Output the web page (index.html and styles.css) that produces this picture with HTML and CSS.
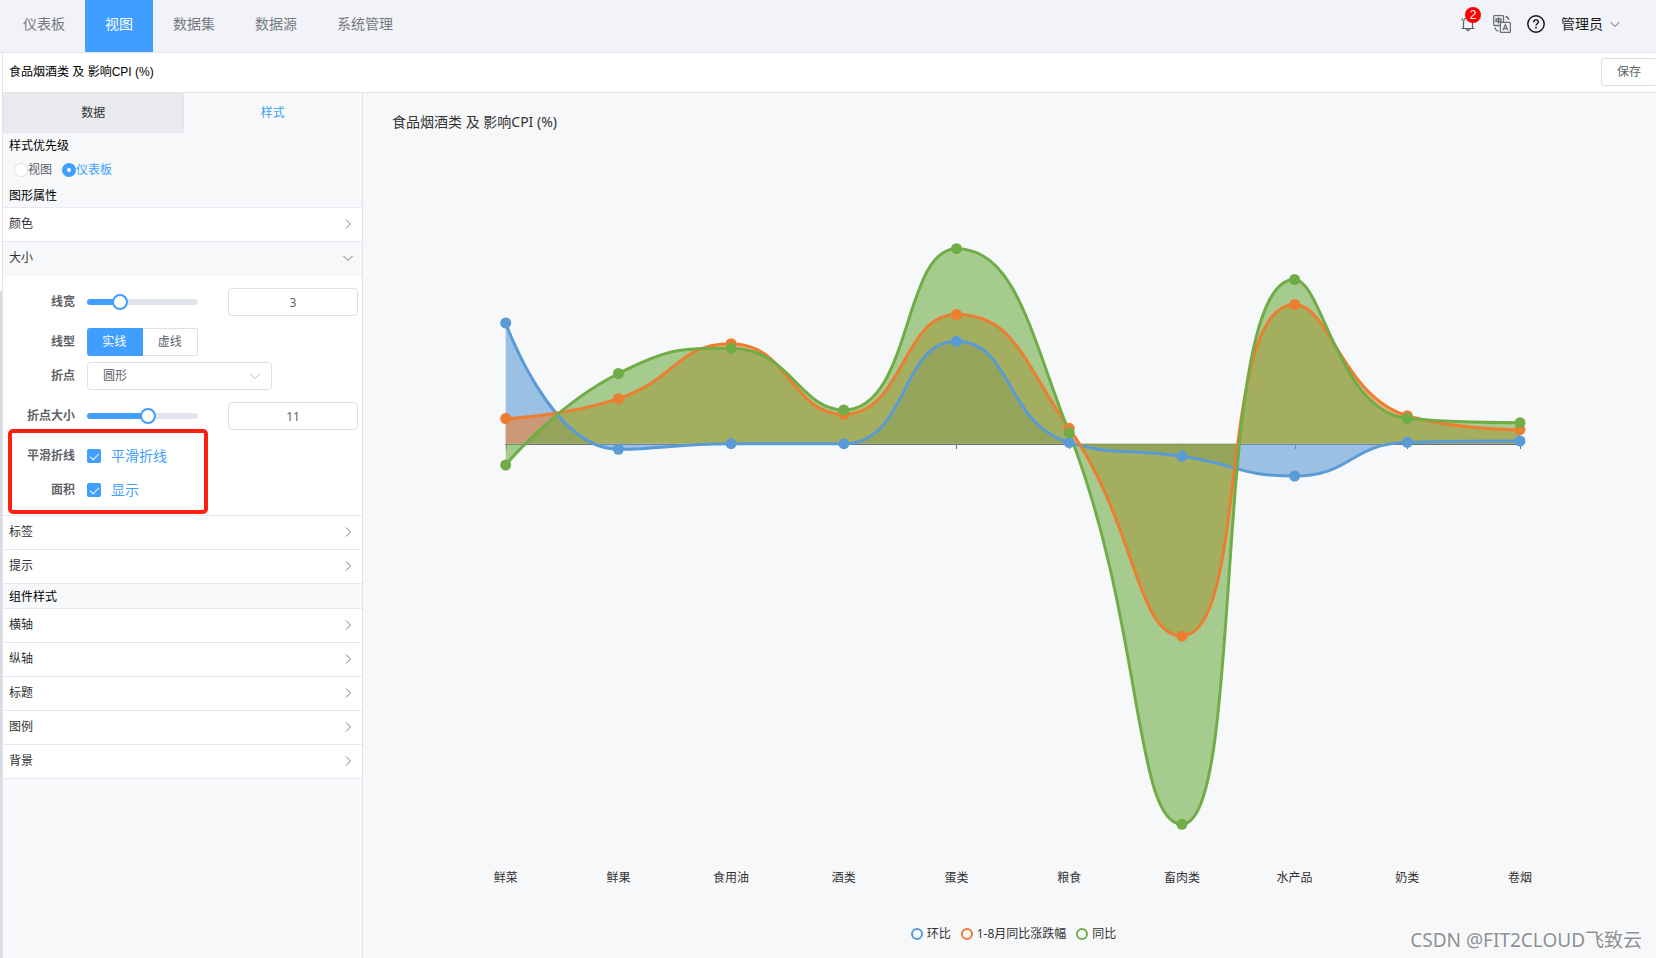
FILE: index.html
```html
<!DOCTYPE html>
<html lang="zh-CN">
<head>
<meta charset="utf-8">
<title>食品烟酒类 及 影响CPI (%)</title>
<link rel="stylesheet" href="styles.css">
</head>
<body>
<svg class="defs" aria-hidden="true">
  <symbol id="right" viewBox="0 0 12 12"><path d="M4 1.5 8.5 6 4 10.5" fill="none" stroke="currentColor"/></symbol>
  <symbol id="down" viewBox="0 0 12 12"><path d="M1.5 4 6 8.5 10.5 4" fill="none" stroke="currentColor"/></symbol>
</svg>
<header class="header">
  <nav class="menu">
    <a href="#">仪表板</a>
    <a href="#" class="active">视图</a>
    <a href="#">数据集</a>
    <a href="#">数据源</a>
    <a href="#">系统管理</a>
  </nav>
  <div class="tools">
    <button class="tool bell" type="button" aria-label="消息">
      <svg width="16" height="18" viewBox="0 0 16 18" fill="none" stroke="#5a5e66" stroke-width="1.2"><path d="M3.500 13.500V7.500C3.500 4.500 5.500 2.600 8 2.600s4.500 1.900 4.500 4.900v6M1.500 13.500h13M6 14l2 1.800 2-1.800M1.500 5.500l1.500-2"/></svg>
      <span class="badge">2</span>
    </button>
    <button class="tool lang" type="button" aria-label="语言">
      <svg width="18" height="18" viewBox="0 0 18 18" fill="none" stroke="#6b6e75" stroke-width="1.300"><path d="M7 10.500H1.600a1 1 0 0 1-1-1V1.600a1 1 0 0 1 1-1h7.900a1 1 0 0 1 1 1V7"/><path d="M3 4h5v2.500H3zM5.500 2.200v6.400"/><rect x="7.400" y="7.400" width="10" height="10" rx="1"/><path d="M10 15.200l2.400-5.600 2.400 5.600M10.800 13.600h3.200M12.500 1.500q3 .5 3.300 3.500M2 12.500q.4 3 3.500 3.700"/></svg>
    </button>
    <button class="tool help" type="button" aria-label="帮助">
      <svg width="18" height="18" viewBox="0 0 18 18" fill="none" stroke="#111" stroke-width="1.400"><circle cx="9" cy="9" r="8.200"/><path d="M6.700 7.200C6.700 5.700 7.700 4.900 9 4.900s2.300.8 2.300 2.100c0 1.700-2.300 1.800-2.300 3.500M9 11.800v1.600"/></svg>
    </button>
    <button class="user" type="button">管理员 <svg width="12" height="12"><use href="#down"/></svg></button>
  </div>
</header>
<div class="page">
  <div class="rail"></div>
  <div class="editor">
    <div class="titlebar">
      <h1>食品烟酒类 及 影响CPI (%)</h1>
      <button class="save" type="button">保存</button>
    </div>
    <div class="body">
      <aside class="side">
        <div class="tabs" role="tablist">
          <button type="button" role="tab" class="tab">数据</button>
          <button type="button" role="tab" class="tab current" aria-selected="true">样式</button>
        </div>
        <h2 class="caption">样式优先级</h2>
        <div class="radios">
          <label><input type="radio" name="priority">视图</label>
          <label><input type="radio" name="priority" checked>仪表板</label>
        </div>
        <h2 class="caption">图形属性</h2>
        <div class="group">
          <button class="item" type="button">颜色<svg><use href="#right"/></svg></button>
          <button class="item open" type="button">大小<svg><use href="#down"/></svg></button>
          <form class="form">
            <div class="row tall">
              <label for="lw">线宽</label>
              <div class="slider" style="--value:30%"><input id="lw" type="range" min="0" max="10" value="3"></div>
              <input class="number" type="text" value="3" aria-label="线宽数值">
            </div>
            <div class="row">
              <span class="label">线型</span>
              <div class="segment"><button type="button" class="on">实线</button><button type="button">虚线</button></div>
            </div>
            <div class="row">
              <label for="sym">折点</label>
              <div class="select"><select id="sym"><option>圆形</option></select><svg><use href="#down"/></svg></div>
            </div>
            <div class="row tall">
              <label for="ss">折点大小</label>
              <div class="slider" style="--value:55%"><input id="ss" type="range" min="0" max="20" value="11"></div>
              <input class="number" type="text" value="11" aria-label="折点大小数值">
            </div>
            <div class="row">
              <span class="label">平滑折线</span>
              <label class="check"><input type="checkbox" checked>平滑折线</label>
            </div>
            <div class="row">
              <span class="label">面积</span>
              <label class="check"><input type="checkbox" checked>显示</label>
            </div>
            <div class="mark"></div>
          </form>
          <button class="item" type="button">标签<svg><use href="#right"/></svg></button>
          <button class="item" type="button">提示<svg><use href="#right"/></svg></button>
        </div>
        <h2 class="caption">组件样式</h2>
        <div class="group">
          <button class="item" type="button">横轴<svg><use href="#right"/></svg></button>
          <button class="item" type="button">纵轴<svg><use href="#right"/></svg></button>
          <button class="item" type="button">标题<svg><use href="#right"/></svg></button>
          <button class="item" type="button">图例<svg><use href="#right"/></svg></button>
          <button class="item" type="button">背景<svg><use href="#right"/></svg></button>
        </div>
      </aside>
      <main class="view">
        <h2 class="chart-title">食品烟酒类 及 影响CPI (%)</h2>
        <svg id="chart" class="chart" viewBox="363 140 1293 784"></svg>
        <ul class="legend">
          <li class="blue">环比</li>
          <li class="orange">1-8月同比涨跌幅</li>
          <li class="green">同比</li>
        </ul>
        <div class="watermark">CSDN @FIT2CLOUD飞致云</div>
      </main>
    </div>
  </div>
</div>
<script src="chart.js"></script>
</body>
</html>
```

FILE: styles.css
```css
*, *::before, *::after { box-sizing: border-box; }
body {
  margin: 0;
  height: 100vh;
  display: flex;
  flex-direction: column;
  overflow: hidden;
  background: #fff;
  color: #000;
  font: 12px/20px "Liberation Sans", "Noto Sans CJK SC", sans-serif;
}
h1, h2, ul { margin: 0; padding: 0; font-size: 12px; font-weight: 400; list-style: none; }
button, input, select { font: inherit; color: inherit; margin: 0; }
button { background: none; border: 0; padding: 0; cursor: pointer; }
svg { display: block; flex: none; }
.defs { position: absolute; width: 0; height: 0; }

.header {
  display: flex;
  justify-content: space-between;
  height: 53px;
  flex: none;
  padding-left: 3px;
  background: #f1f3f8;
  border-bottom: 1px solid #e2e3e6;
  font-size: 14px;
}
.menu { display: flex; }
.menu a {
  padding: 0 20px;
  line-height: 48px;
  color: #76797f;
  text-decoration: none;
}
.menu .active { background: #409eff; color: #fff; }
.tools { display: flex; align-items: center; padding: 0 35px 4px 0; }
.tool { position: relative; }
.bell { margin-right: 17px; }
.lang { margin-right: 16px; }
.help { margin-right: 16px; }
.badge {
  position: absolute;
  left: 5px;
  top: -8px;
  width: 16px;
  height: 16px;
  border-radius: 8px;
  background: #f00;
  color: #fff;
  font-size: 12px;
  line-height: 16px;
}
.user { display: flex; align-items: center; gap: 6px; color: #1a1a1a; }
.user svg { color: #606266; }

.page { display: flex; flex: 1; min-height: 0; }
.rail { width: 2px; margin-top: 238px; background: #d9dce6; }
.editor {
  flex: 1;
  min-width: 0;
  display: flex;
  flex-direction: column;
  border-left: 1px solid #e2e3e6;
}
.titlebar {
  display: flex;
  align-items: center;
  justify-content: space-between;
  height: 40px;
  flex: none;
  padding: 0 0 2px 6px;
  border-bottom: 1px solid #e2e3e6;
}
.save {
  height: 28px;
  width: 56px;
  margin-right: -1px;
  border: 1px solid #dcdfe6;
  border-radius: 3px;
  background: #fff;
  color: #606266;
}
.body { display: flex; flex: 1; min-height: 0; background: #f7f8fa; }

.side { width: 360px; flex: none; border-right: 1px solid #e2e3e6; }
.tabs { display: flex; height: 40px; }
.tab { flex: 1; color: #303133; border-radius: 3px; }
.tab:first-child { background: #e8eaed; border: 1px solid #e2e5eb; border-top: 0; }
.tab.current { color: #409eff; }
.caption { padding: 3px 6px 1px; }
.radios { display: flex; gap: 10px; height: 26px; padding: 0 11px; color: #606266; }
.radios label { display: flex; align-items: center; }
.radios label:has(:checked) { color: #409eff; }
input[type="radio"] {
  appearance: none;
  width: 14px;
  height: 14px;
  border: 1px solid #dcdfe6;
  border-radius: 50%;
  background: #fff;
}
input[type="radio"]:checked { border: 5px solid #409eff; }
.group { border-top: 1px solid #e6e9f2; }
.item {
  display: flex;
  align-items: center;
  justify-content: space-between;
  width: 100%;
  height: 34px;
  padding: 0 8px 1px 6px;
  background: #fff;
  border-bottom: 1px solid #e6e9f2;
  color: #303133;
}
.item svg { width: 12px; height: 12px; color: #777a80; }
.item.open { background: #f7f8fa; border-bottom-color: #f7f8fa; }

.form {
  position: relative;
  display: flex;
  flex-direction: column;
  gap: 6px;
  padding: 6px 4px 11px;
  background: #fff;
  border-bottom: 1px solid #e6e9f2;
  color: #606266;
}
.row { display: flex; align-items: center; height: 28px; }
.row.tall { height: 40px; }
.row > label:first-child, .label {
  width: 80px;
  padding-right: 12px;
  text-align: right;
  font-weight: 700;
}
.slider {
  width: 111px;
  height: 6px;
  border-radius: 3px;
  background: linear-gradient(to right, #409eff var(--value), #e0e4ed var(--value));
}
.slider input {
  display: block;
  appearance: none;
  width: calc(100% + 16px);
  height: 16px;
  margin: -5px -8px;
  background: none;
}
.slider input::-webkit-slider-thumb {
  appearance: none;
  box-sizing: border-box;
  width: 16px;
  height: 16px;
  border: 2px solid #409eff;
  border-radius: 50%;
  background: #fff;
}
.number {
  width: 130px;
  height: 28px;
  margin-left: auto;
  border: 1px solid #dcdfe6;
  border-radius: 4px;
  text-align: center;
  font-family: "Noto Sans", sans-serif;
}
.segment { display: flex; width: 111px; height: 28px; }
.segment button { flex: 1; border: 1px solid #dcdfe6; border-left: 0; border-radius: 0 3px 3px 0; }
.segment .on { background: #409eff; border-color: #409eff; color: #fff; border-radius: 3px 0 0 3px; }
.select { position: relative; width: 185px; }
.select select {
  appearance: none;
  width: 100%;
  height: 28px;
  padding: 0 15px;
  border: 1px solid #dcdfe6;
  border-radius: 4px;
  background: #fff;
}
.select svg { position: absolute; right: 11px; top: 8px; width: 12px; height: 12px; color: #b4b8c0; }
.check { display: flex; align-items: center; gap: 10px; font-size: 14px; color: #409eff; }
.check input {
  appearance: none;
  display: grid;
  place-items: center;
  width: 14px;
  height: 14px;
  border-radius: 2px;
  background: #409eff;
}
.check input::after {
  content: "";
  width: 5px;
  height: 9px;
  margin-bottom: 2px;
  border: solid #fff;
  border-width: 0 1px 1px 0;
  transform: rotate(45deg);
}
.mark {
  position: absolute;
  left: 5px;
  top: 153px;
  width: 200px;
  height: 85px;
  border: 4px solid #ff1f10;
  border-radius: 5px;
  pointer-events: none;
}

.view {
  position: relative;
  flex: 1;
  min-width: 0;
  display: flex;
  flex-direction: column;
  font-family: "Noto Sans", "Noto Sans CJK SC", sans-serif;
  color: #333;
}
.chart-title { padding: 19px 29px 8px; font-size: 14px; }
.chart { width: 100%; flex: 1; min-height: 0; }
.chart text { font-size: 12px; fill: #333; text-anchor: middle; }
.legend { display: flex; justify-content: center; gap: 10px; padding: 0 0 14px 8px; }
.legend li { display: flex; align-items: center; gap: 4px; }
.legend li::before { content: ""; width: 12px; height: 12px; border: 2px solid; border-radius: 50%; }
.legend .blue::before { color: #5b9bd5; }
.legend .orange::before { color: #ed7d31; }
.legend .green::before { color: #70ad47; }
.watermark {
  position: absolute;
  right: 14px;
  bottom: 4px;
  font-size: 19px;
  line-height: 28px;
  color: #8d8f92;
  text-shadow: -1px -1px 0 #fff;
}
```

FILE: chart.js
```js
const categories = ["鲜菜", "鲜果", "食用油", "酒类", "蛋类", "粮食", "畜肉类", "水产品", "奶类", "卷烟"];
const series = [
  { color: "#5b9bd5", y: [323, 449.3, 443.7, 443.7, 341.3, 442.6, 456.3, 476, 442.3, 441] },
  { color: "#ed7d31", y: [418.5, 398.7, 343.7, 414.3, 314.5, 428.3, 636, 304.5, 415.7, 429.7] },
  { color: "#70ad47", y: [465, 373.5, 348.3, 410, 248.7, 432.7, 824.3, 279.5, 418.3, 422.7] }
];
const left = 505.7, step = 112.7, zero = 443.7, smooth = 0.5;
const px = i => left + step * i;
const clamp = (v, a, b) => Math.max(Math.min(v, Math.max(a, b)), Math.min(a, b));

// Bezier through all points, with control points kept inside each segment
function curve(ys) {
  let d = `M${px(0)} ${ys[0]}`;
  let c0 = [px(0), ys[0]];
  for (let i = 1; i < ys.length; i++) {
    const p = [px(i), ys[i]], prev = [px(i - 1), ys[i - 1]];
    let c1 = p, next0 = p;
    if (i < ys.length - 1) {
      const next = [px(i + 1), ys[i + 1]];
      const lp = Math.hypot(p[0] - prev[0], p[1] - prev[1]);
      const ln = Math.hypot(next[0] - p[0], next[1] - p[1]);
      const r = ln / (ln + lp);
      next0 = p.map((v, k) => clamp(v + (next[k] - prev[k]) * smooth * r, next[k], v));
      c1 = p.map((v, k) => clamp(v - (next0[k] - v) * lp / ln, prev[k], v));
      next0 = p.map((v, k) => v + (v - c1[k]) * ln / lp);
    }
    d += `C${c0} ${c1} ${p}`;
    c0 = next0;
  }
  return d;
}

const end = px(categories.length - 1);
let out = `<path d="M505 444.500H${end}" stroke="#6e7079"/>`;
categories.forEach((c, i) => {
  out += `<path d="M${Math.round(px(i) - 0.1) + 0.5} 444v5" stroke="#6e7079"/>`;
  out += `<text x="${px(i)}" y="882">${c}</text>`;
});
series.forEach(s => { out += `<path d="${curve(s.y)}V${zero}H${left}Z" fill="${s.color}" fill-opacity=".6"/>`; });
series.forEach(s => { out += `<path d="${curve(s.y)}" fill="none" stroke="${s.color}" stroke-width="3"/>`; });
series.forEach(s => s.y.forEach((y, i) => { out += `<circle cx="${px(i)}" cy="${y}" r="5.500" fill="${s.color}"/>`; }));
document.getElementById("chart").innerHTML = out;
```
